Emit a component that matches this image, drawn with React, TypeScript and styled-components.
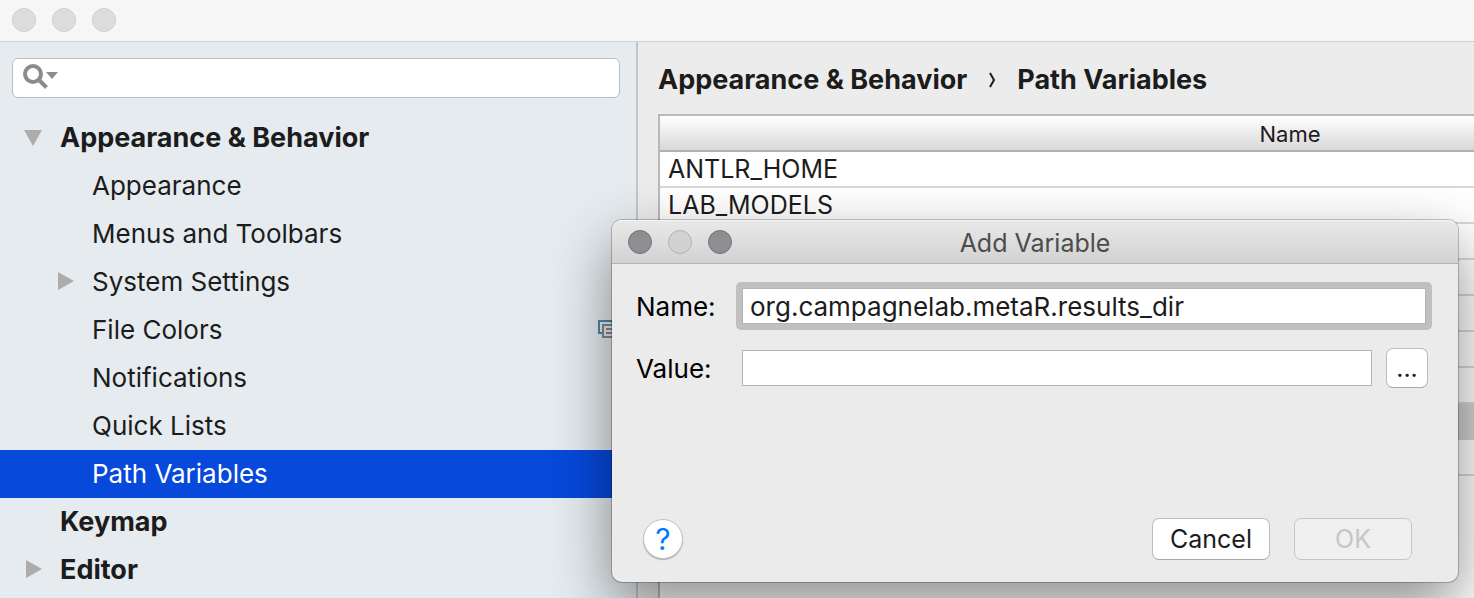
import React from "react";
import styled, { createGlobalStyle, css } from "styled-components";

const Global = createGlobalStyle`
  * { box-sizing: border-box; }
  html, body, #root { height: 100%; }
  body {
    margin: 0;
    overflow: hidden;
    font-family: Inter, "Liberation Sans", sans-serif;
    font-size: 26px;
    line-height: 32px;
    color: #1c1c1c;
  }
  input, button { font: inherit; color: inherit; margin: 0; }
`;

const Window = styled.div`
  position: relative;
  display: flex;
  flex-direction: column;
  height: 100vh;
  overflow: hidden;
  background: #ececec;
`;

const TitleBar = styled.header`
  flex: none;
  display: flex;
  align-items: center;
  gap: 16px;
  height: 42px;
  padding: 0 12px 2px;
  background: #f6f6f6;
  border-bottom: 1px solid #d1d1d1;
`;

const Light = styled.button<{ $tone: "faded" | "dark" | "empty" }>`
  flex: none;
  width: 24px;
  height: 24px;
  padding: 0;
  border-radius: 50%;
  border: 1px solid;
  ${({ $tone }) =>
    $tone === "dark"
      ? css`background: #8e8d92; border-color: #737277;`
      : $tone === "empty"
        ? css`background: #d2d2d2; border-color: #b5b5b5;`
        : css`background: #dddddd; border-color: #d0d0d0;`}
`;

const Body = styled.div`
  flex: 1;
  display: flex;
  min-height: 0;
`;

const Sidebar = styled.aside`
  flex: none;
  width: 638px;
  display: flex;
  flex-direction: column;
  background: #e5ebef;
  border-right: 2px solid #c3c5c7;
`;

const SearchBox = styled.label`
  display: flex;
  align-items: center;
  height: 40px;
  margin: 16px 16px 16px 12px;
  padding: 0 8px 2px;
  background: #fff;
  border: 1px solid #b9bec2;
  border-radius: 6px;
`;

const SearchInput = styled.input`
  flex: 1;
  min-width: 0;
  border: 0;
  outline: 0;
  background: transparent;
`;

const Tree = styled.ul`
  list-style: none;
  margin: 0;
  padding: 0;
`;

const TreeRow = styled.li<{ $level: number; $selected?: boolean }>`
  display: flex;
  align-items: center;
  height: 48px;
  padding: 0 18px 2px ${({ $level }) => ($level ? 56 : 24)}px;
  font-size: ${({ $level }) => ($level ? 26 : 27)}px;
  font-weight: ${({ $level }) => ($level ? 400 : 700)};
  background: ${({ $selected }) => ($selected ? "#0649db" : "transparent")};
  color: ${({ $selected }) => ($selected ? "#fff" : "inherit")};
`;

const Arrow = styled.span`
  flex: none;
  display: flex;
  width: 36px;
`;

const RowLabel = styled.span`
  flex: 1;
  padding-top: 2px;
`;

const Main = styled.main`
  flex: 1;
  min-width: 0;
  display: flex;
  flex-direction: column;
  overflow: hidden;
  padding-left: 20px;
`;

const Breadcrumb = styled.h1`
  display: flex;
  align-items: center;
  gap: 22px;
  margin: 0;
  height: 72px;
  padding-top: 3px;
  font-size: 27px;
  font-weight: 700;
  white-space: nowrap;
`;

const TableFrame = styled.div`
  flex: 1;
  width: 1264px;
  background: #fff;
  border: 2px solid #b9b9b9;
  border-bottom: 0;
`;

const Table = styled.table`
  width: 100%;
  border-collapse: separate;
  border-spacing: 0;
`;

const HeadCell = styled.th`
  height: 36px;
  padding: 2px 0 0;
  font-size: 22px;
  line-height: 32px;
  font-weight: 400;
  background: linear-gradient(#fff, #d8d8d8);
  border-bottom: 2px solid #b0b0b0;
`;

const Cell = styled.td<{ $selected?: boolean }>`
  height: 36px;
  padding: 0 8px;
  font-size: 25px;
  line-height: 32px;
  border-bottom: 2px solid ${({ $selected }) => ($selected ? "#d0d0d0" : "#d9d9d9")};
  background: ${({ $selected }) => ($selected ? "#d2d2d2" : "#fff")};
`;

const Dialog = styled.section`
  position: absolute;
  left: 612px;
  right: 16px;
  top: 220px;
  height: 362px;
  display: flex;
  flex-direction: column;
  background: #ebebeb;
  border-radius: 10px;
  box-shadow: 0 0 0 1px rgba(0, 0, 0, 0.22), 0 24px 60px rgba(0, 0, 0, 0.45);
`;

const DialogBar = styled.header`
  display: grid;
  grid-template-columns: 1fr auto 1fr;
  align-items: center;
  height: 44px;
  padding: 0 16px;
  border-radius: 10px 10px 0 0;
  border-bottom: 1px solid #b2b2b2;
  box-shadow: inset 0 1px #f5f5f5;
  background: linear-gradient(#e9e9e9, #d2d2d2);
  color: #4c4c4c;
`;

const Lights = styled.div`
  display: flex;
  gap: 16px;
`;

const DialogTitle = styled.h2`
  margin: 0;
  padding-top: 2px;
  font-size: 25px;
  line-height: 32px;
  font-weight: 400;
`;

const Form = styled.form`
  flex: 1;
  display: flex;
  flex-direction: column;
  padding: 18px 26px 22px 24px;
`;

const Field = styled.div`
  display: flex;
  align-items: center;
  height: 48px;
  margin-bottom: 14px;
  color: #000;
`;

const FieldLabel = styled.label`
  flex: none;
  width: 100px;
  padding-top: 2px;
`;

const FocusRing = styled.div<{ $active?: boolean }>`
  flex: 1;
  min-width: 0;
  display: flex;
  padding: 6px;
  border-radius: 5px;
  background: ${({ $active }) => ($active ? "#c0c0c2" : "transparent")};
`;

const TextInput = styled.input`
  flex: 1;
  min-width: 0;
  height: 36px;
  padding: 0 7px;
  color: #1c1c1c;
  background: #fff;
  border: 1px solid #b4b4b5;
  border-radius: 0;
  outline: 0;
`;

const Button = styled.button<{ $wide?: boolean }>`
  flex: none;
  width: ${({ $wide }) => ($wide ? 118 : 42)}px;
  height: ${({ $wide }) => ($wide ? 42 : 40)}px;
  padding: 0;
  font-size: 25px;
  background: #fff;
  border: 1px solid #bcbcbc;
  border-bottom-color: #a8a8a8;
  border-radius: 7px;
  color: #1c1c1c;
  &:disabled {
    background: #f0f0f0;
    border-color: #c6c6c6;
    color: #c6c6c6;
  }
`;

const BrowseButton = styled(Button)`
  margin: 0 4px 0 8px;
`;

const Footer = styled.footer`
  display: flex;
  align-items: center;
  gap: 24px;
  margin-top: auto;
  padding: 0 20px 0 7px;
`;

const HelpButton = styled.button`
  width: 40px;
  height: 40px;
  margin-right: auto;
  padding: 0;
  border: 1px solid #c2c2c2;
  border-radius: 50%;
  background: #fff;
  box-shadow: 0 1px 1px rgba(0, 0, 0, 0.25);
  color: #007aff;
  font-size: 30px;
`;

const SearchIcon = () => (
  <svg width="38" height="30" viewBox="0 0 38 30" aria-hidden="true">
    <circle cx="12" cy="12" r="8" fill="none" stroke="#8c8c8c" strokeWidth="4" />
    <path d="M17.500 17.500L25.500 25.500" stroke="#8c8c8c" strokeWidth="4" />
    <path d="M25 10h12l-6 7z" fill="#8c8c8c" />
  </svg>
);

const Triangle = ({ open }: { open: boolean }) => (
  <svg width="18" height="18" viewBox="0 0 18 18" aria-hidden="true">
    <path d={open ? "M0 2h18L9 18z" : "M2 0v18l16-9z"} fill="#acacac" />
  </svg>
);

const CopyIcon = () => (
  <svg width="20" height="20" viewBox="0 0 20 20" fill="none" aria-hidden="true">
    <path d="M14 4V2H1v12h3" stroke="#4a86a8" strokeWidth="2" />
    <path d="M5 6h14v12H5zM8 10h8M8 14h8" stroke="#85898c" strokeWidth="2" />
  </svg>
);

type Item = { label: string; level: number; open?: boolean; selected?: boolean; project?: boolean };

const items: Item[] = [
  { label: "Appearance & Behavior", level: 0, open: true },
  { label: "Appearance", level: 1 },
  { label: "Menus and Toolbars", level: 1 },
  { label: "System Settings", level: 1, open: false },
  { label: "File Colors", level: 1, project: true },
  { label: "Notifications", level: 1 },
  { label: "Quick Lists", level: 1 },
  { label: "Path Variables", level: 1, selected: true },
  { label: "Keymap", level: 0 },
  { label: "Editor", level: 0, open: false },
];

const variables = ["ANTLR_HOME", "LAB_MODELS", "", "", "", "", "", "", ""];
const selectedVariable = 7;

export default function App() {
  return (
    <>
      <Global />
      <Window>
        <TitleBar>
          <Light $tone="faded" aria-label="Close window" />
          <Light $tone="faded" aria-label="Minimize window" />
          <Light $tone="faded" aria-label="Zoom window" />
        </TitleBar>
        <Body>
          <Sidebar>
            <SearchBox>
              <SearchIcon />
              <SearchInput type="text" aria-label="Search settings" />
            </SearchBox>
            <Tree>
              {items.map((item) => (
                <TreeRow key={item.label} $level={item.level} $selected={item.selected}>
                  <Arrow>{item.open !== undefined && <Triangle open={item.open} />}</Arrow>
                  <RowLabel>{item.label}</RowLabel>
                  {item.project && <CopyIcon />}
                </TreeRow>
              ))}
            </Tree>
          </Sidebar>
          <Main>
            <Breadcrumb>
              <span>Appearance &amp; Behavior</span>
              <svg width="6" height="16" viewBox="0 0 6 16" fill="none" aria-hidden="true">
                <path d="M1 1l4 7-4 7" stroke="#1c1c1c" strokeWidth="2" />
              </svg>
              <span>Path Variables</span>
            </Breadcrumb>
            <TableFrame>
              <Table>
                <thead>
                  <tr>
                    <HeadCell scope="col">Name</HeadCell>
                  </tr>
                </thead>
                <tbody>
                  {variables.map((name, i) => (
                    <tr key={i}>
                      <Cell $selected={i === selectedVariable}>{name}</Cell>
                    </tr>
                  ))}
                </tbody>
              </Table>
            </TableFrame>
          </Main>
        </Body>
        <Dialog role="dialog" aria-labelledby="dialog-title">
          <DialogBar>
            <Lights>
              <Light $tone="dark" aria-label="Close" />
              <Light $tone="empty" aria-label="Minimize" disabled />
              <Light $tone="dark" aria-label="Zoom" />
            </Lights>
            <DialogTitle id="dialog-title">Add Variable</DialogTitle>
          </DialogBar>
          <Form onSubmit={(e) => e.preventDefault()}>
            <Field>
              <FieldLabel htmlFor="name">Name:</FieldLabel>
              <FocusRing $active>
                <TextInput id="name" defaultValue="org.campagnelab.metaR.results_dir" />
              </FocusRing>
            </Field>
            <Field>
              <FieldLabel htmlFor="value">Value:</FieldLabel>
              <FocusRing>
                <TextInput id="value" />
              </FocusRing>
              <BrowseButton type="button" aria-label="Browse">...</BrowseButton>
            </Field>
            <Footer>
              <HelpButton type="button" aria-label="Help">?</HelpButton>
              <Button $wide type="button">Cancel</Button>
              <Button $wide type="submit" disabled>OK</Button>
            </Footer>
          </Form>
        </Dialog>
      </Window>
    </>
  );
}
